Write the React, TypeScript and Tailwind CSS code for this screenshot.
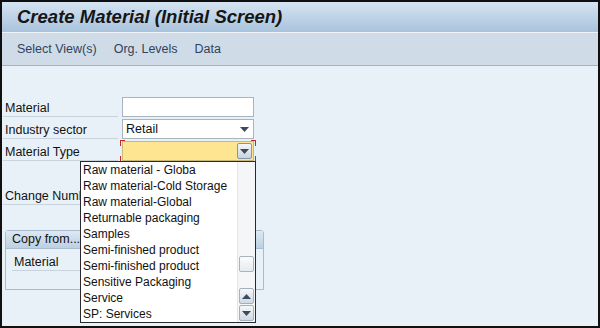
import React from 'react';

const items = [
    'Raw material - Globa',
    'Raw material-Cold Storage',
    'Raw material-Global',
    'Returnable packaging',
    'Samples',
    'Semi-finished product',
    'Semi-finished product',
    'Sensitive Packaging',
    'Service',
    'SP: Services',
];

const font = { fontFamily: '"Liberation Sans", Arial, sans-serif' };

const Arrow: React.FC<{ up?: boolean }> = ({ up }) => (
    <svg width="9" height="5" viewBox="0 0 9 5">
        <path d={up ? 'M0 5 L4.5 0 L9 5 Z' : 'M0 0 L9 0 L4.5 5 Z'} fill="#3c4c5e" />
    </svg>
);

const Label: React.FC<{ text: string }> = ({ text }) => (
    <div className="w-[115px] h-[20px] flex items-end pl-[2px] border-b border-[#c8d3de] text-[12.5px] text-[#111] leading-[16px] overflow-hidden whitespace-nowrap">
        {text}
    </div>
);

const Corner: React.FC<{ pos: string }> = ({ pos }) => (
    <span className={`absolute w-[5px] h-[6px] border-[#c0262c] ${pos}`}></span>
);

export default function App() {
    return (
        <div className="w-[600px] h-[328px] border-2 border-[#101010] bg-[#e9f1f8] flex flex-col overflow-hidden" style={font}>
            <div className="h-[31px] shrink-0 bg-gradient-to-b from-[#d5e4f2] to-[#a9c3dc] flex items-center pl-[15px] border-b border-[#eef4fa]">
                <span className="text-[18.5px] font-bold italic text-[#161616] leading-none">Create Material (Initial Screen)</span>
            </div>
            <div className="h-[33px] shrink-0 bg-[#cfdce8] border-b border-[#a2b3c5] flex items-center gap-[17px] pl-[15px] text-[12.5px] text-[#2f435c]">
                <span>Select View(s)</span>
                <span>Org. Levels</span>
                <span>Data</span>
            </div>
            <div className="relative flex-1 pt-[31px] pl-[1px]">
                <div className="flex flex-col gap-[2px]">
                    <div className="flex items-end gap-[4px]">
                        <Label text="Material" />
                        <div className="w-[132px] h-[20px] bg-white border border-[#a9b4bf]"></div>
                    </div>
                    <div className="flex items-end gap-[4px]">
                        <Label text="Industry sector" />
                        <div className="w-[132px] h-[20px] bg-white border border-[#a9b4bf] flex items-center justify-between pl-[3px] pr-[4px] text-[12.5px] text-[#111]">
                            <span>Retail</span>
                            <Arrow />
                        </div>
                    </div>
                    <div className="flex items-end gap-[4px]">
                        <Label text="Material Type" />
                        <div className="relative w-[132px] h-[20px] bg-[#fde592] border border-[#c9b878] flex items-center justify-end pr-[1px]">
                            <Corner pos="-left-[3px] -top-[2px] border-l border-t" />
                            <Corner pos="-right-[3px] -top-[2px] border-r border-t" />
                            <Corner pos="-left-[3px] -bottom-[2px] border-l border-b" />
                            <Corner pos="-right-[3px] -bottom-[2px] border-r border-b" />
                            <div className="w-[15px] h-[16px] bg-gradient-to-b from-[#f4f7fa] to-[#c9d4de] border border-[#8796a6] rounded-[2px] flex items-center justify-center">
                                <Arrow />
                            </div>
                        </div>
                    </div>
                    <div className="h-[20px]"></div>
                    <div className="flex items-end gap-[4px]">
                        <Label text="Change Number" />
                    </div>
                </div>
                <div className="mt-[25px] ml-[2px] w-[259px] h-[60px] border border-[#a9bccf] rounded-t-[3px] flex flex-col">
                    <div className="h-[18px] bg-gradient-to-b from-[#dde8f3] to-[#bcd0e3] border-b border-[#a9bccf] pl-[6px] flex items-center text-[12.5px] text-[#111]">
                        Copy from...
                    </div>
                    <div className="pl-[6px] pt-[2px]">
                        <div className="w-[100px] h-[20px] flex items-end pl-[2px] border-b border-[#c8d3de] text-[12.5px] text-[#111] leading-[16px]">Material</div>
                    </div>
                </div>

                <div className="absolute left-[78px] top-[95px] w-[176px] h-[162px] bg-white border border-[#2a2a2a] flex">
                    <div className="flex-1 flex flex-col pl-[2px] text-[12px] text-[#111]">
                        {items.map((t, i) => (
                            <div key={i} className="h-[16px] leading-[16px] whitespace-nowrap">{t}</div>
                        ))}
                    </div>
                    <div className="w-[18px] bg-[#f4f6f8] border-l border-[#e2e7ec] flex flex-col items-center">
                        <div className="h-[94px]"></div>
                        <div className="w-[15px] h-[16px] bg-gradient-to-b from-[#fbfcfd] to-[#e6ebf0] border border-[#a9b3bd] rounded-[2px]"></div>
                        <div className="flex-1"></div>
                        <div className="w-[15px] h-[16px] bg-gradient-to-b from-[#f6f8fa] to-[#d0d9e2] border border-[#a4b0bc] rounded-[2px] flex items-center justify-center mb-[1px]">
                            <Arrow up />
                        </div>
                        <div className="w-[15px] h-[16px] bg-gradient-to-b from-[#f6f8fa] to-[#d0d9e2] border border-[#a4b0bc] rounded-[2px] flex items-center justify-center mb-[1px]">
                            <Arrow />
                        </div>
                    </div>
                </div>
            </div>
        </div>
    );
}
